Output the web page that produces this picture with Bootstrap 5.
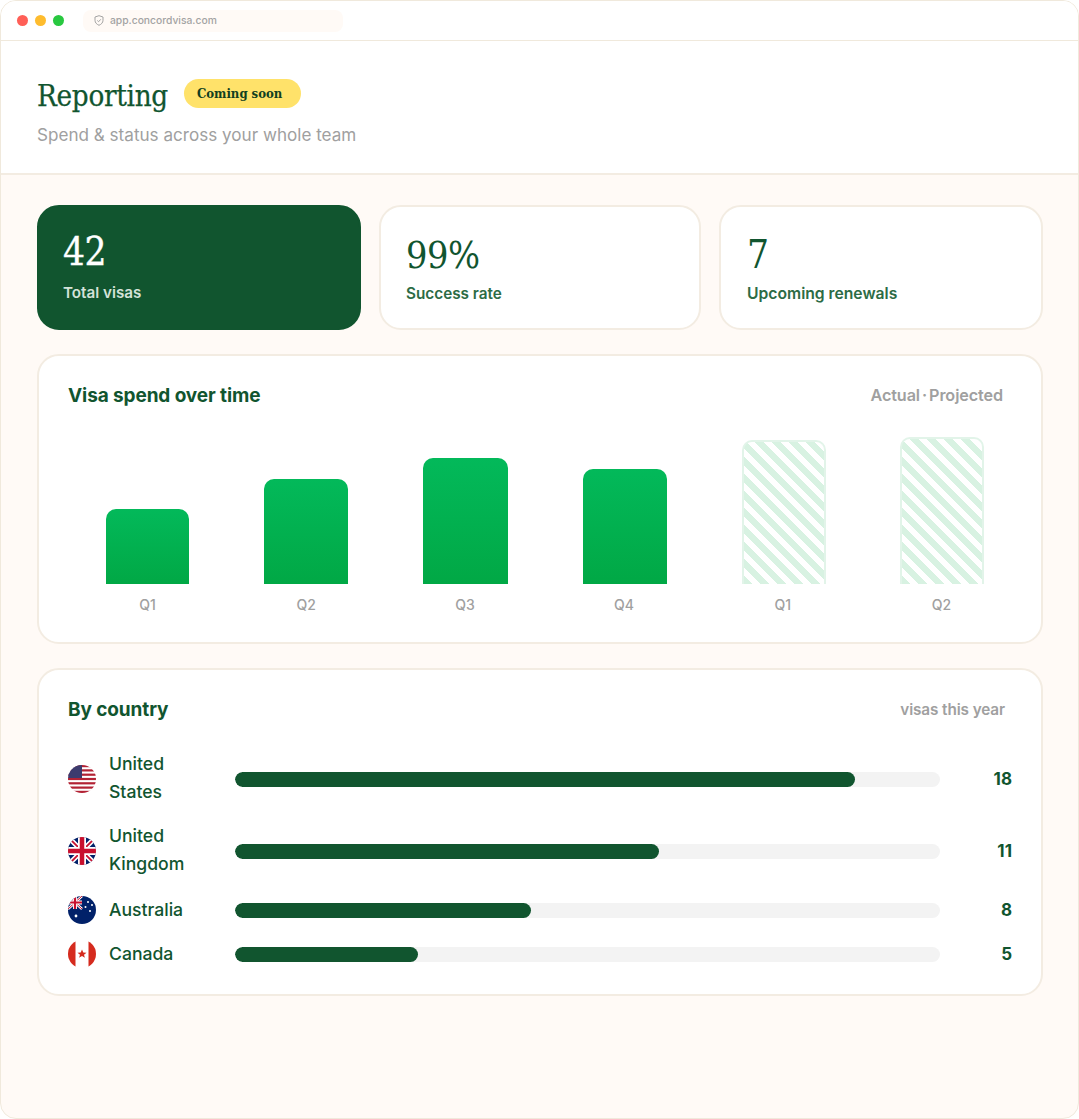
<!DOCTYPE html>
<html lang="en">
<head>
<meta charset="utf-8">
<title>Reporting</title>
<link href="https://cdn.jsdelivr.net/npm/bootstrap@5.3.0/dist/css/bootstrap.min.css" rel="stylesheet">
<style>
html,body{height:100%;background:#fff;margin:0}
body{font-family:Inter,"Liberation Sans",sans-serif;overflow:hidden}
.frame{height:1119px;width:1079px;border:1px solid #f0e9dc;border-radius:16px;overflow:hidden;background:#fffaf6;display:flex;flex-direction:column}
.topbar{height:40px;flex:none;background:#fff;border-bottom:1px solid #f0e9dc;padding-left:16px;gap:7px}
.tdot{width:11px;height:11px;border-radius:50%;flex:none}
.urlbox{width:260px;height:22px;margin-left:12px;background:#fffaf6;border-radius:8px;padding-left:11px;gap:6px;font-size:10.3px;color:#a3a3a3;font-weight:500}
.headarea{height:134px;flex:none;background:#fff;border-bottom:2px solid #f3ece2;padding:37px 35px 0 36px}
.pagetitle{font-family:"DejaVu Serif Condensed","Liberation Serif",serif;font-size:29.3px;line-height:36px;color:#11552f;margin:0;letter-spacing:-.3px;-webkit-text-stroke:.25px #11552f}
.soon{font-family:"DejaVu Serif Condensed","Liberation Serif",serif;font-weight:700;font-size:13px;line-height:29px;height:29px;background:#ffe26a;color:#123f1f;border-radius:15px;padding:0 19px 0 13px;margin:0 0 6px 16px}
.subline{font-size:17.1px;line-height:24px;color:#a0a0a0;margin-top:9px}
.mainarea{padding:30px 35px 0 36px;gap:24px}
.statbox{height:125px;background:#fff;border:2px solid #f3ece2;border-radius:22px;padding:23px 26px 0}
.statone{flex:0 0 324px}
.stattwo{flex:0 0 322px;padding-left:25px}
.statthree{flex:1 1 0}
.statbox.dark{background:#11552f;border-color:#11552f;padding:20px 24px 0}
.statnum{font-family:"DejaVu Serif Condensed","Liberation Serif",serif;font-size:38.5px;line-height:50px;color:#11552f;letter-spacing:-.5px}
.stattwo .statnum{font-size:37.5px}
.dark .statnum{color:#fff;-webkit-text-stroke:.3px #fff}
.statlab{font-size:15.7px;line-height:20px;font-weight:600;color:#2c6b45;margin-top:4px}
.stattwo .statlab{font-size:15.3px}
.dark .statlab{color:#d4e2d8;font-size:15.2px;margin-top:6px}
.panel{background:#fff;border:2px solid #f3ece2;border-radius:22px}
.chartpanel{height:290px;padding:26px 18px 0 29px}
.charthead{padding-right:20px}
.paneltitle{font-size:19px;line-height:28px;font-weight:700;color:#11552f;letter-spacing:-.1px;margin:0}
.panelnote{font-size:16.2px;font-weight:600;color:#a0a0a0;letter-spacing:-.1px;margin-bottom:2px}
.panelnote.narrow{font-size:15.3px;margin-bottom:0}
.notedot{margin:0 2px}
.plot{height:148px;margin-top:26px;padding-right:2px}
.plotcol{flex:1 1 0;display:flex;flex-direction:column;align-items:center}
.barfill{width:84px;margin-top:auto;background:linear-gradient(180deg,#03b95a,#01a845);border-radius:10px 10px 0 0}
.barhatch{width:84px;margin-top:auto;border:2px solid #e2f4e9;border-bottom:0;border-radius:10px 10px 0 0;background:repeating-linear-gradient(45deg,#d8f2e2 0 6px,#fff 6px 12px)}
.barshift{margin-left:2px}
.plotlabs{margin-top:12px;padding-right:2px}
.plotlab{flex:1 1 0;text-align:center;font-size:14px;font-weight:500;line-height:18px;color:#a0a0a0}
.countrypanel{height:328px;padding:26px 29px 0 29px}
.rowb{margin-top:-2px}
.twoline{padding-bottom:2px}
.flagicon{width:28px;height:28px;flex:none;border-radius:50%;overflow:hidden;margin-right:13px}
.cname{width:126px;flex:none;font-size:17.6px;line-height:28px;font-weight:500;color:#11552f;padding-right:30px}
.tracker{flex:1 1 0;height:15px;background:#f3f3f3;border-radius:8px;overflow:hidden}
.trackfill{height:100%;background:#11552f;border-radius:8px}
.cvalue{width:72px;flex:none;text-align:right;font-size:17px;font-weight:700;color:#11552f;padding-top:2px}
.countries{margin-top:26px;gap:16px}
</style>
</head>
<body>
<div class="frame">
  <div class="topbar d-flex align-items-center">
    <span class="tdot" style="background:#ff5f57"></span>
    <span class="tdot" style="background:#febc2e"></span>
    <span class="tdot" style="background:#28c840"></span>
    <div class="urlbox d-flex align-items-center">
      <svg width="10" height="11" viewBox="0 0 10 11" fill="none" stroke="#a3a3a3" stroke-width="1"><path d="M5 .7 9 2v3.3c0 2.400-1.700 4-4 5-2.300-1-4-2.600-4-5V2z"/><path d="M3.300 5.500 4.600 6.700 6.800 4.300"/></svg>
      <span>app.concordvisa.com</span>
    </div>
  </div>
  <div class="headarea">
    <div class="d-flex align-items-center"><h1 class="pagetitle">Reporting</h1><span class="soon">Coming soon</span></div>
    <div class="subline">Spend &amp; status across your whole team</div>
  </div>
  <div class="mainarea d-flex flex-column">
    <div class="d-flex" style="gap:18px">
      <div class="statbox statone dark"><div class="statnum">42</div><div class="statlab">Total visas</div></div>
      <div class="statbox stattwo"><div class="statnum">99%</div><div class="statlab">Success rate</div></div>
      <div class="statbox statthree"><div class="statnum">7</div><div class="statlab">Upcoming renewals</div></div>
    </div>
    <div class="panel chartpanel">
      <div class="charthead d-flex justify-content-between align-items-center"><h2 class="paneltitle">Visa spend over time</h2><span class="panelnote">Actual<span class="notedot">·</span>Projected</span></div>
      <div class="plot d-flex">
        <div class="plotcol"><div class="barfill" style="height:75px;width:83px"></div></div>
        <div class="plotcol"><div class="barfill" style="height:105px"></div></div>
        <div class="plotcol"><div class="barfill" style="height:126px;width:85px"></div></div>
        <div class="plotcol"><div class="barfill barshift" style="height:115px"></div></div>
        <div class="plotcol"><div class="barhatch barshift" style="height:144px"></div></div>
        <div class="plotcol"><div class="barhatch" style="height:147px"></div></div>
      </div>
      <div class="plotlabs d-flex">
        <div class="plotlab">Q1</div><div class="plotlab">Q2</div><div class="plotlab">Q3</div><div class="plotlab">Q4</div><div class="plotlab">Q1</div><div class="plotlab">Q2</div>
      </div>
    </div>
    <div class="panel countrypanel">
      <div class="d-flex justify-content-between align-items-center" style="padding-right:7px"><h2 class="paneltitle">By country</h2><span class="panelnote narrow">visas this year</span></div>
      <div class="countries d-flex flex-column">
        <div class="d-flex align-items-center">
          <svg class="flagicon" viewBox="0 0 28 28"><rect width="28" height="28" fill="#fff"/><g fill="#b22234"><rect width="28" height="2.200"/><rect y="4.300" width="28" height="2.200"/><rect y="8.600" width="28" height="2.200"/><rect y="12.900" width="28" height="2.200"/><rect y="17.200" width="28" height="2.200"/><rect y="21.500" width="28" height="2.200"/><rect y="25.800" width="28" height="2.200"/></g><rect width="14" height="13" fill="#3c3b6e"/></svg>
          <div class="cname twoline">United States</div>
          <div class="tracker"><div class="trackfill" style="width:88%"></div></div>
          <div class="cvalue">18</div>
        </div>
        <div class="rowb d-flex align-items-center">
          <svg class="flagicon" viewBox="0 0 28 28"><rect width="28" height="28" fill="#012169"/><path d="M0 0 28 28M28 0 0 28" stroke="#fff" stroke-width="5"/><path d="M0 0 28 28M28 0 0 28" stroke="#c8102e" stroke-width="1.800"/><path d="M14 0V28M0 14H28" stroke="#fff" stroke-width="8"/><path d="M14 0V28M0 14H28" stroke="#c8102e" stroke-width="4.500"/></svg>
          <div class="cname twoline">United Kingdom</div>
          <div class="tracker"><div class="trackfill" style="width:60.100%"></div></div>
          <div class="cvalue">11</div>
        </div>
        <div class="d-flex align-items-center">
          <svg class="flagicon" viewBox="0 0 28 28"><rect width="28" height="28" fill="#012169"/><g><path d="M0 0 14 13M14 0 0 13" stroke="#fff" stroke-width="2.500"/><path d="M0 0 14 13M14 0 0 13" stroke="#c8102e" stroke-width="1"/><path d="M7 0V13M0 6.500H14" stroke="#fff" stroke-width="4"/><path d="M7 0V13M0 6.500H14" stroke="#c8102e" stroke-width="2.200"/></g><g fill="#fff"><circle cx="20" cy="6" r="1"/><circle cx="24" cy="9" r="1"/><circle cx="17.500" cy="11" r="1"/><circle cx="22" cy="15" r="1"/><circle cx="8" cy="20" r="1.400"/></g></svg>
          <div class="cname">Australia</div>
          <div class="tracker"><div class="trackfill" style="width:42%"></div></div>
          <div class="cvalue">8</div>
        </div>
        <div class="d-flex align-items-center">
          <svg class="flagicon" viewBox="0 0 28 28"><rect width="28" height="28" fill="#fff"/><rect width="7.500" height="28" fill="#d52b1e"/><rect x="20.500" width="7.500" height="28" fill="#d52b1e"/><path d="M14 9.500l1.300 3 3.200.2-2.500 2 .9 3.100-2.900-1.700-2.900 1.700.9-3.100-2.500-2 3.200-.2z" fill="#d52b1e"/></svg>
          <div class="cname">Canada</div>
          <div class="tracker"><div class="trackfill" style="width:26%"></div></div>
          <div class="cvalue">5</div>
        </div>
      </div>
    </div>
  </div>
</div>
<script src="https://cdn.jsdelivr.net/npm/bootstrap@5.3.0/dist/js/bootstrap.bundle.min.js"></script>
</body>
</html>
